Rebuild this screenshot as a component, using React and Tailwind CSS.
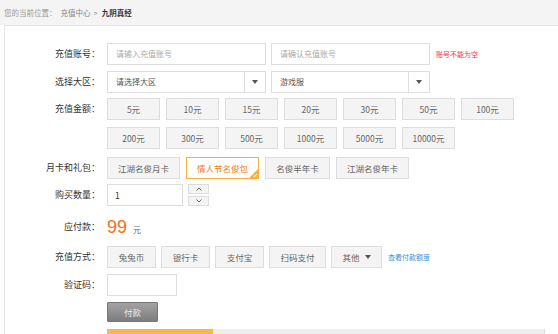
import React from "react";

const amounts = ["5元", "10元", "15元", "20元", "30元", "50元", "100元", "200元", "300元", "500元", "1000元", "5000元", "10000元"];

const cards = [
  { name: "江湖名俊月卡", w: "w-[73px]" },
  { name: "情人节名俊包", w: "w-[73px]", active: true },
  { name: "名俊半年卡", w: "w-[65px]" },
  { name: "江湖名俊年卡", w: "w-[73px]" },
];

const methods = [
  { name: "兔兔币", w: "w-[49px]" },
  { name: "银行卡", w: "w-[49px]" },
  { name: "支付宝", w: "w-[49px]" },
  { name: "扫码支付", w: "w-[57px]" },
];

function Label({ children }) {
  return (
    <div className="w-[95px] h-[22px] flex items-center justify-end text-[9px] text-[#333] shrink-0">
      {children}
    </div>
  );
}

function Caret() {
  return (
    <svg width="6" height="4" viewBox="0 0 6 4">
      <polygon points="0,0 6,0 3,4" fill="#555" />
    </svg>
  );
}

function Select({ text }) {
  return (
    <div className="w-[159px] h-[22px] border border-[#ddd] bg-white flex">
      <div className="flex-1 flex items-center pl-[8px] text-[8px] text-[#555]">{text}</div>
      <div className="w-[21px] border-l border-[#ddd] flex items-center justify-center">
        <Caret />
      </div>
    </div>
  );
}

function Btn({ children, className = "" }) {
  return (
    <div
      className={`h-[22px] border border-[#ddd] bg-[#f4f4f4] flex items-center justify-center text-[8.5px] text-[#666] ${className}`}
    >
      {children}
    </div>
  );
}

export default function App() {
  return (
    <div className="w-[558px] h-[334px] overflow-hidden bg-white font-['Noto_Sans_CJK_SC',sans-serif]">
      {/* breadcrumb */}
      <div className="h-[25px] bg-[#f4f4f4] flex items-center pl-[4px] text-[7.5px] text-[#999]">
        <span>您的当前位置：</span>
        <span className="ml-[4px] text-[#888]">充值中心</span>
        <span className="ml-[3px] text-[#888]">&gt;</span>
        <span className="ml-[4px] text-[#333] font-bold">九阴真经</span>
      </div>

      <div className="ml-[4px] border-l border-t border-[#e4e4e4] pt-[17px] h-full">
        {/* account */}
        <div className="flex items-center">
          <Label>充值账号：</Label>
          <div className="ml-[7px] flex gap-[5px] items-center">
            <div className="w-[159px] h-[22px] border border-[#ddd] flex items-center pl-[8px] text-[8px] text-[#aaa]">
              请输入充值账号
            </div>
            <div className="w-[159px] h-[22px] border border-[#ddd] flex items-center pl-[8px] text-[8px] text-[#aaa]">
              请确认充值账号
            </div>
            <span className="ml-[1px] text-[7px] text-[#f33]">账号不能为空</span>
          </div>
        </div>

        {/* server */}
        <div className="flex items-center mt-[6px]">
          <Label>选择大区：</Label>
          <div className="ml-[7px] flex gap-[5px]">
            <Select text="请选择大区" />
            <Select text="游戏服" />
          </div>
        </div>

        {/* amount */}
        <div className="flex items-start mt-[5px]">
          <Label>充值金额：</Label>
          <div className="ml-[7px] w-[420px] flex flex-wrap gap-x-[6px] gap-y-[7px]">
            {amounts.map((a) => (
              <Btn key={a} className="w-[53px]">
                {a}
              </Btn>
            ))}
          </div>
        </div>

        {/* cards */}
        <div className="flex items-center mt-[8px]">
          <Label>月卡和礼包：</Label>
          <div className="ml-[7px] flex gap-[6px]">
            {cards.map((c) =>
              c.active ? (
                <div
                  key={c.name}
                  className={`relative ${c.w} h-[22px] border border-[#fbb040] bg-white flex items-center justify-center text-[8.5px] text-[#f27c22]`}
                >
                  {c.name}
                  <svg className="absolute right-0 bottom-0" width="9" height="9" viewBox="0 0 9 9">
                    <polygon points="9,0 9,9 0,9" fill="#fbb040" />
                    <polyline points="4.5,6.5 5.8,7.6 7.8,5" fill="none" stroke="#fff" strokeWidth="0.9" />
                  </svg>
                </div>
              ) : (
                <Btn key={c.name} className={c.w}>
                  {c.name}
                </Btn>
              )
            )}
          </div>
        </div>

        {/* quantity */}
        <div className="flex items-center mt-[5px]">
          <Label>购买数量：</Label>
          <div className="ml-[7px] flex gap-[5px]">
            <div className="w-[76px] h-[22px] border border-[#ddd] flex items-center pl-[7px] text-[8.5px] text-[#333]">
              1
            </div>
            <div className="flex flex-col gap-[2px]">
              <div className="w-[21px] h-[10px] border border-[#ddd] bg-[#f4f4f4] flex items-center justify-center">
                <svg width="6" height="4" viewBox="0 0 6 4">
                  <polyline points="0.5,3.5 3,1 5.5,3.5" fill="none" stroke="#666" strokeWidth="1" />
                </svg>
              </div>
              <div className="w-[21px] h-[10px] border border-[#ddd] bg-[#f4f4f4] flex items-center justify-center">
                <svg width="6" height="4" viewBox="0 0 6 4">
                  <polyline points="0.5,0.5 3,3 5.5,0.5" fill="none" stroke="#666" strokeWidth="1" />
                </svg>
              </div>
            </div>
          </div>
        </div>

        {/* total */}
        <div className="flex items-center mt-[10px]">
          <Label>应付款：</Label>
          <div className="ml-[7px] flex items-baseline">
            <span className="text-[18px] leading-none text-[#ff6a13] font-['Liberation_Sans',sans-serif]">99</span>
            <span className="ml-[6px] text-[8px] text-[#666]">元</span>
          </div>
        </div>

        {/* methods */}
        <div className="flex items-center mt-[8px]">
          <Label>充值方式：</Label>
          <div className="ml-[7px] flex items-center gap-[5px]">
            {methods.map((m) => (
              <Btn key={m.name} className={m.w}>
                {m.name}
              </Btn>
            ))}
            <Btn className="w-[51px] gap-[5px]">
              其他
              <Caret />
            </Btn>
            <span className="ml-[1px] text-[7px] text-[#3b8fd9]">查看付款额度</span>
          </div>
        </div>

        {/* captcha */}
        <div className="flex items-center mt-[6px]">
          <Label>验证码：</Label>
          <div className="ml-[7px] w-[70px] h-[22px] border border-[#ddd]" />
        </div>

        {/* submit */}
        <div className="flex mt-[6px]">
          <div className="w-[95px]" />
          <div className="ml-[7px] w-[51px] h-[20px] rounded-[1px] border border-[#777] bg-gradient-to-b from-[#a3a3a3] to-[#7d7d7d] flex items-center justify-center text-[8.5px] text-[#eee]">
            付款
          </div>
        </div>

        {/* progress */}
        <div className="flex mt-[7px]">
          <div className="w-[95px]" />
          <div className="ml-[7px] w-[438px] h-[5px] bg-[#eee] border-r border-[#ddd] flex">
            <div className="w-[106px] h-full bg-[#fbb64a]" />
          </div>
        </div>
      </div>
    </div>
  );
}
